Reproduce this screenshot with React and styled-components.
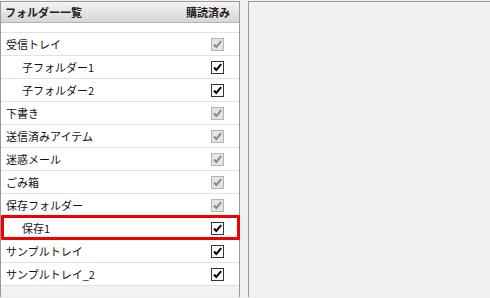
import React from "react";
import styled, { createGlobalStyle } from "styled-components";

const Global = createGlobalStyle`
  html, body { margin: 0; padding: 0; background: #f0f0f0; overflow: hidden; }
  body { font-family: "Noto Sans CJK JP", "Noto Sans", sans-serif; }
`;

const Page = styled.div`
  display: flex;
  gap: 8px;
  padding-top: 1px;
  height: 297px;
  box-sizing: border-box;
`;

const FolderPanel = styled.div`
  width: 240px;
  flex: none;
  box-sizing: border-box;
  border: 1px solid #9a9a9a;
  border-bottom: none;
  background: #f2f2f2;
  display: flex;
  flex-direction: column;
`;

const ContentPanel = styled.div`
  flex: 1;
  box-sizing: border-box;
  border: 1px solid #9a9a9a;
  border-bottom: none;
  border-right: none;
  background: #f1f1f1;
`;

const Header = styled.div`
  height: 20px;
  display: flex;
  align-items: center;
  justify-content: space-between;
  padding: 0 9px 0 4px;
  background: linear-gradient(#f4f4f4, #d6d6d6);
  border-bottom: 1px solid #b4b4b4;
  font-size: 11px;
  font-weight: bold;
  color: #222;
`;

const Spacer = styled.div`
  height: 9px;
  background: #fff;
  border-bottom: 1px solid #e2e2e2;
`;

const Row = styled.div`
  position: relative;
  height: 22px;
  display: flex;
  align-items: center;
  justify-content: space-between;
  padding: 0 15px 0 ${(p) => (p.$indent ? 21 : 5)}px;
  background: #fff;
  border-bottom: 1px solid #e2e2e2;
  font-size: 11px;
  color: #111;
  ${(p) =>
    p.$highlight &&
    `
    &::after {
      content: "";
      position: absolute;
      left: 0px;
      right: -1px;
      top: -2px;
      bottom: -1px;
      border: 3px solid #f00000;
      border-radius: 1px;
    }
  `}
`;

const Label = styled.span`
  letter-spacing: 0;
`;

const Box = styled.span`
  width: 13px;
  height: 13px;
  box-sizing: border-box;
  display: inline-flex;
  align-items: center;
  justify-content: center;
  border: 1px solid ${(p) => (p.$disabled ? "#b4b4b4" : "#333")};
  background: ${(p) => (p.$disabled ? "#e4e4e4" : "#fff")};
`;

const Check = ({ disabled }) => (
  <Box $disabled={disabled}>
    <svg width="11" height="11" viewBox="0 0 11 11">
      <path
        d="M2 5.5 L4.3 8 L9.2 2.2"
        fill="none"
        stroke={disabled ? "#8a8a8a" : "#000"}
        strokeWidth="2"
      />
    </svg>
  </Box>
);

const folders = [
  { name: "受信トレイ", disabled: true },
  { name: "子フォルダー1", indent: true },
  { name: "子フォルダー2", indent: true },
  { name: "下書き", disabled: true },
  { name: "送信済みアイテム", disabled: true },
  { name: "迷惑メール", disabled: true },
  { name: "ごみ箱", disabled: true },
  { name: "保存フォルダー", disabled: true },
  { name: "保存1", indent: true, highlight: true },
  { name: "サンプルトレイ" },
  { name: "サンプルトレイ_2" },
];

export default function App() {
  return (
    <>
      <Global />
      <Page>
        <FolderPanel>
          <Header>
            <span>フォルダー一覧</span>
            <span>購読済み</span>
          </Header>
          <Spacer />
          {folders.map((f) => (
            <Row key={f.name} $indent={f.indent} $highlight={f.highlight}>
              <Label>{f.name}</Label>
              <Check disabled={f.disabled} />
            </Row>
          ))}
        </FolderPanel>
        <ContentPanel />
      </Page>
    </>
  );
}
